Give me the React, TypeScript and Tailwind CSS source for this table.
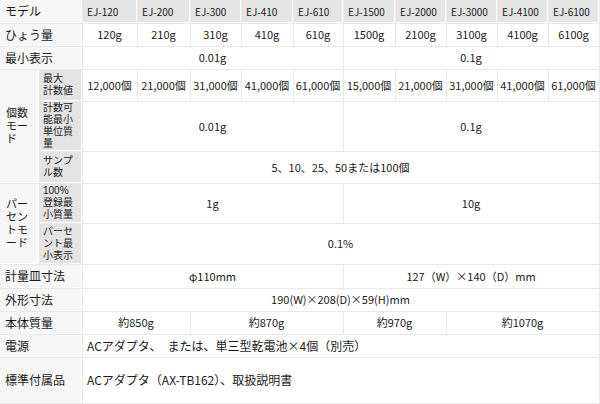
import React from "react";

const models = ["EJ-120", "EJ-200", "EJ-300", "EJ-410", "EJ-610", "EJ-1500", "EJ-2000", "EJ-3000", "EJ-4100", "EJ-6100"];
const caps = ["120g", "210g", "310g", "410g", "610g", "1500g", "2100g", "3100g", "4100g", "6100g"];
const counts = ["12,000個", "21,000個", "31,000個", "41,000個", "61,000個", "15,000個", "21,000個", "31,000個", "41,000個", "61,000個"];

function C({ className = "", children }: { className?: string; children?: React.ReactNode }) {
  return <div className={"border-r border-b border-white flex items-center min-w-0 " + className}>{children}</div>;
}

function Label({ children, className = "" }: { children: React.ReactNode; className?: string }) {
  return <C className={"col-span-2 bg-[#f6f6f6] pl-[5px] text-[12px] " + className}>{children}</C>;
}

function Sub({ children }: { children: React.ReactNode }) {
  return (
    <C className="bg-[#e3e3e3] pl-[3px] text-[10px] leading-[12px] font-['Liberation_Sans','Noto_Sans_CJK_JP',sans-serif]">
      <span>{children}</span>
    </C>
  );
}

function V({ children, className = "" }: { children: React.ReactNode; className?: string }) {
  return <C className={"bg-white justify-center text-[11px] whitespace-nowrap " + className}>{children}</C>;
}

export default function App() {
  return (
    <div className="w-[600px] h-[404px] bg-white font-['Noto_Sans_CJK_JP',sans-serif] text-[#1a1a1a]">
      <div className="grid grid-cols-[39px_42px_54px_52px_50px_51px_49px_51px_50px_50px_50px_50px] grid-rows-[23px_22px_22px_31px_49px_31px_39px_40px_23px_22px_22px_22px_45px] gap-px bg-[#e8e8e8] pr-px pb-px">
        <Label>モデル</Label>
        {models.map((m) => (
          <C key={m} className="bg-[#e4e4e4] pl-[4px] text-[10px] whitespace-nowrap">{m}</C>
        ))}

        <Label>ひょう量</Label>
        {caps.map((c) => (
          <V key={c}>{c}</V>
        ))}

        <Label>最小表示</Label>
        <V className="col-span-5">0.01g</V>
        <V className="col-span-5">0.1g</V>

        <C className="row-span-3 bg-[#f6f6f6] pl-[6px] text-[11px] leading-[13px] font-['Liberation_Sans','Noto_Sans_CJK_JP',sans-serif]">
          <span>個数<br />モード</span>
        </C>
        <Sub>最大<br />計数値</Sub>
        {counts.map((c, i) => (
          <V key={i} className="text-[10px]">{c}</V>
        ))}

        <Sub>計数可<br />能最小<br />単位質<br />量</Sub>
        <V className="col-span-5">0.01g</V>
        <V className="col-span-5">0.1g</V>

        <Sub>サンプ<br />ル数</Sub>
        <V className="col-span-10">5、10、25、50または100個</V>

        <C className="row-span-2 bg-[#f6f6f6] pl-[6px] text-[11px] leading-[13px] font-['Liberation_Sans','Noto_Sans_CJK_JP',sans-serif]">
          <span>パー<br />セン<br />トモ<br />ード</span>
        </C>
        <Sub>100%<br />登録最<br />小質量</Sub>
        <V className="col-span-5">1g</V>
        <V className="col-span-5">10g</V>

        <Sub>パーセ<br />ント最<br />小表示</Sub>
        <V className="col-span-10">0.1%</V>

        <Label>計量皿寸法</Label>
        <V className="col-span-5">φ110mm</V>
        <V className="col-span-5">127（W）×140（D）mm</V>

        <Label>外形寸法</Label>
        <V className="col-span-10">190(W)×208(D)×59(H)mm</V>

        <Label>本体質量</Label>
        <V className="col-span-2">約850g</V>
        <V className="col-span-3">約870g</V>
        <V className="col-span-2">約970g</V>
        <V className="col-span-3">約1070g</V>

        <Label>電源</Label>
        <C className="col-span-10 bg-white pl-[4px] text-[12px] whitespace-nowrap">ACアダプタ、{"\u2002"}または、単三型乾電池×4個（別売）</C>

        <Label>標準付属品</Label>
        <C className="col-span-10 bg-white pl-[4px] text-[12px] whitespace-nowrap">ACアダプタ（AX-TB162）、取扱説明書</C>
      </div>
    </div>
  );
}
